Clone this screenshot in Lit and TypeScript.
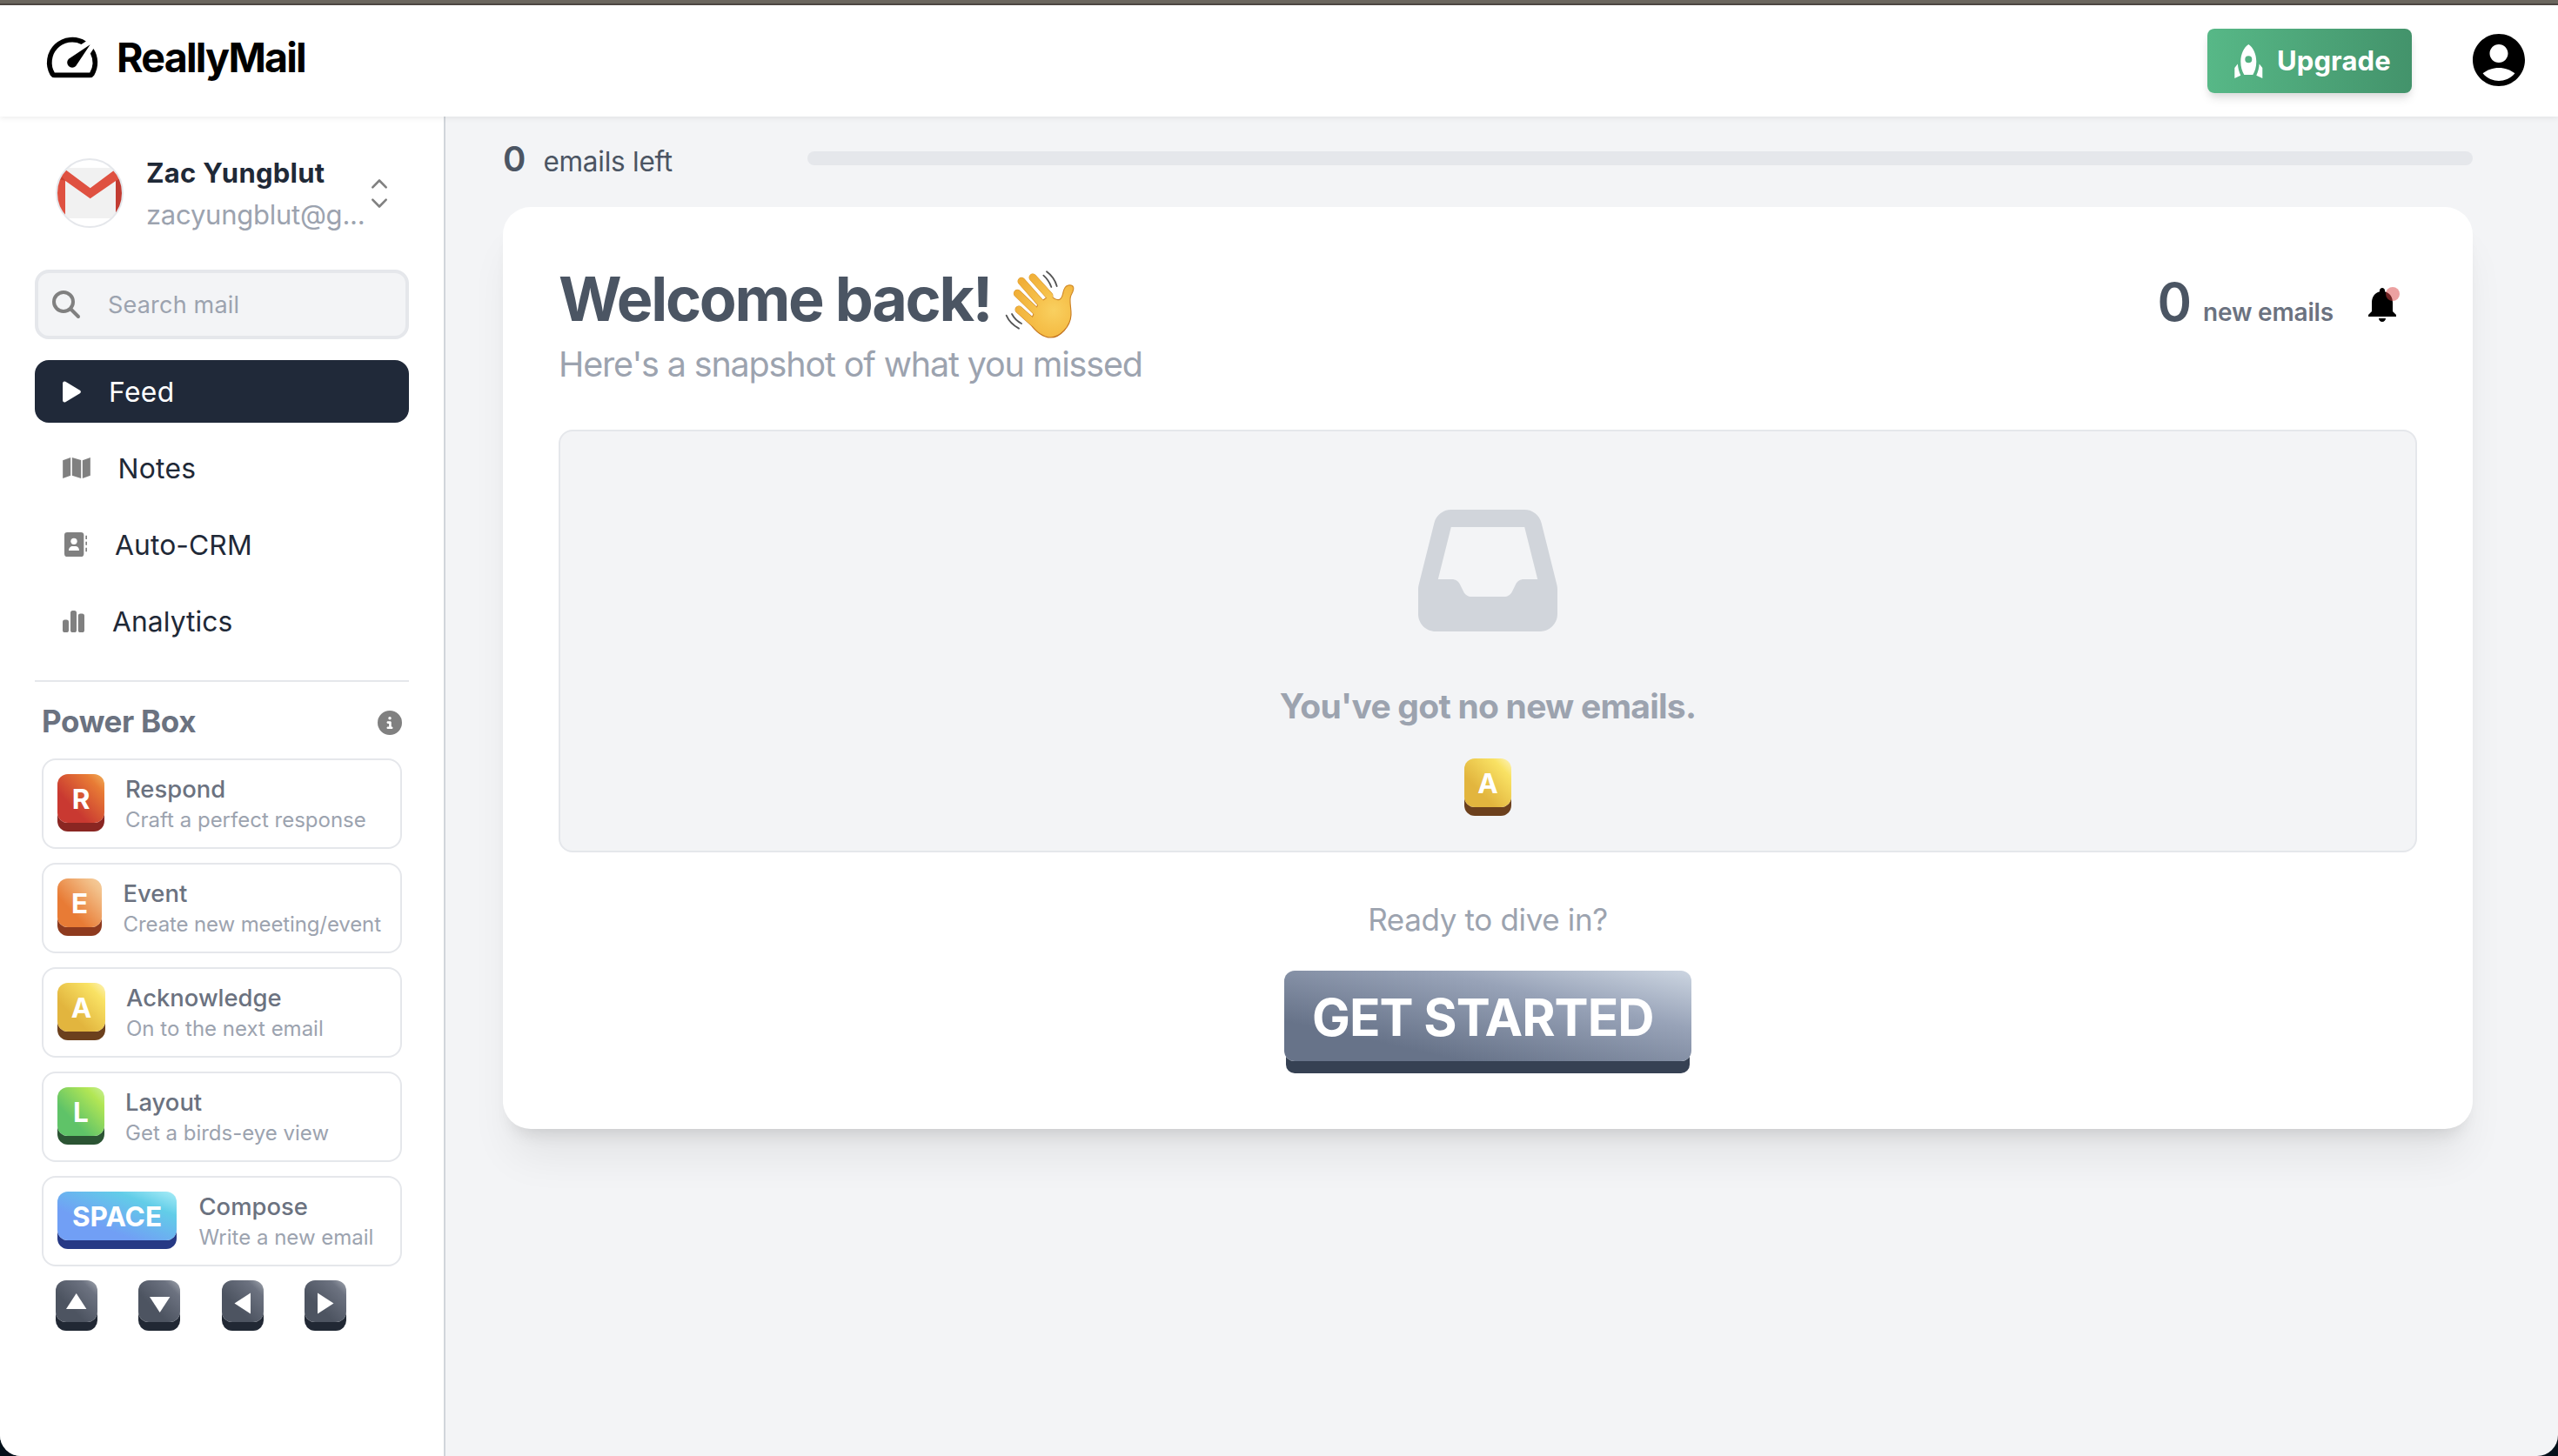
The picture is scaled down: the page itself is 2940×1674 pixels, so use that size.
import { LitElement, html, svg, css } from "lit";
import { customElement } from "lit/decorators.js";

const navIcons = {
  play: html`<svg width="21" height="25" viewBox="0 0 21 25"><path d="M2.200 2.600v19.800L18.800 12.500z" fill="#fff" stroke="#fff" stroke-width="4.200" stroke-linejoin="round"/></svg>`,
  map: html`<svg width="32" height="24" viewBox="0 0 95 72" fill="#808080"><path d="M0 10 27 0v62L0 72zM32 0l31 9v63l-31-10zM68 10 95 0v62l-27 10z"/></svg>`,
  contact: html`<svg width="28" height="28" viewBox="-6 0 84 84"><rect width="67" height="84" rx="10" fill="#808080"/><circle cx="33" cy="31" r="11" fill="#fff"/><path d="M15 63c0-10 7-15 13-15h10c7 0 13 5 13 15z" fill="#fff"/><path d="M73 11h5v13h-5zM73 32h5v12h-5zM73 53h5v14h-5z" fill="#808080"/></svg>`,
  bars: html`<svg width="26" height="25" viewBox="0 0 26 25" fill="#808080"><rect y="10.500" width="7" height="14.500" rx="2.600"/><rect x="9" width="7" height="25" rx="2.600"/><rect x="17.800" y="3.500" width="7.200" height="21.500" rx="2.600"/></svg>`,
};

const nav = [
  { label: "Feed", icon: navIcons.play, cls: "feed" },
  { label: "Notes", icon: navIcons.map, cls: "notes" },
  { label: "Auto-CRM", icon: navIcons.contact, cls: "crm" },
  { label: "Analytics", icon: navIcons.bars, cls: "analytics" },
];

const powers = [
  { key: "R", cls: "red", title: "Respond", text: "Craft a perfect response" },
  { key: "E", cls: "orange", title: "Event", text: "Create new meeting/event" },
  { key: "A", cls: "yellow", title: "Acknowledge", text: "On to the next email" },
  { key: "L", cls: "green", title: "Layout", text: "Get a birds-eye view" },
  { key: "SPACE", cls: "blue", title: "Compose", text: "Write a new email" },
];

const arrows = ["M0 18 11.7 0l11.7 18z", "M0 4h23.4L11.7 22z", "M21 -.5v24L2.5 11.5z", "M3 -.5v24L21.5 11.5z"];

const fingers = ["M123 51 180 114", "M84 64 154 143", "M70 106 138 172", "M75 162 124 206"];

const wave = html`<svg class="wave" width="100" height="94" viewBox="0 0 300 282">
  <defs>
    <radialGradient id="skin" gradientUnits="userSpaceOnUse" cx="195" cy="165" r="150">
      <stop offset="0" stop-color="#f9d060"/><stop offset=".45" stop-color="#f6c04a"/><stop offset="1" stop-color="#f0ae37"/>
    </radialGradient>
    <linearGradient id="edge" gradientUnits="userSpaceOnUse" x1="120" y1="60" x2="200" y2="260">
      <stop offset="0" stop-color="#dd9c31"/><stop offset="1" stop-color="#c0701d"/>
    </linearGradient>
  </defs>
  <g fill="none" stroke="url(#edge)" stroke-width="27" stroke-linecap="round">${fingers.map((d) => svg`<path d=${d}/>`)}</g>
  <path fill="url(#skin)" stroke="url(#edge)" stroke-width="3.500" d="M112 208C132 236 155 258 185 258c32 0 68-38 70-78 1-24-6-42-2-62 2-10 13-21 10-33-4-11-24-10-31 5-7 13-4 32-17 37-12 4-22-5-31-16l-42 30z"/>
  <g fill="none" stroke="url(#skin)" stroke-width="23.500" stroke-linecap="round">${fingers.map((d) => svg`<path d=${d}/>`)}</g>
  <path fill="url(#skin)" d="M122 200c18 26 40 46 64 46 28 0 58-32 60-66 1-20-6-40-2-62-12 18-40 24-56 2l-44 30z"/>
  <g fill="none" stroke="#555" stroke-width="5.500" stroke-linecap="round"><path d="M171 31Q197 50 206 81M160 44Q178 60 187 84M32 182Q44 210 75 227M51 177Q62 198 84 210"/></g>
</svg>`;

@customElement("app-root")
export class AppRoot extends LitElement {
  static styles = css`
    :host { display: block; height: 100vh; background: #04101a; font-family: Inter, "Liberation Sans", sans-serif; color: #1f2937; overflow: hidden; }
    * { box-sizing: border-box; }
    svg { display: block; flex: none; overflow: visible; }
    .t { white-space: pre; display: block; }
    .window { height: 100%; display: flex; flex-direction: column; border-radius: 0 0 24px 24px; overflow: hidden; background: #f3f4f6; }
    .strip { height: 6px; flex: none; background: #6b665e; border-bottom: 2px solid #4d4743; }
    header { height: 128px; flex: none; background: #fff; display: flex; align-items: center; justify-content: space-between; padding: 0 32px 0 48px; box-shadow: 0 2px 6px rgba(0,0,0,.07); position: relative; z-index: 1; }
    .brand { display: flex; align-items: center; gap: 16px; margin-top: -8px; }
    .brand .t { font-size: 46.6px; font-weight: 700; color: #000; letter-spacing: -1.8px; }
    .actions { display: flex; align-items: center; gap: 64px; }
    .avatar { margin-top: -2px; }
    .upgrade { width: 235px; height: 74px; border-radius: 8px; background: linear-gradient(90deg, #57b887, #43936b); color: #fff; display: flex; align-items: center; padding-left: 31px; gap: 16px; box-shadow: 0 8px 12px -2px rgba(0,0,0,.1), 0 4px 8px -2px rgba(0,0,0,.08); }
    .upgrade .t { font-size: 31px; font-weight: 700; letter-spacing: .1px; margin-top: -1px; }
    .body { flex: 1; display: flex; min-height: 0; }
    aside { width: 512px; flex: none; background: #fff; border-right: 2px solid #d1d5db; padding: 40px 40px 0; }
    .profile { height: 96px; padding-left: 24px; display: flex; align-items: center; }
    .names { width: 258.5px; margin: 1px 0 0 26px; line-height: 48px; }
    .name { font-size: 31px; font-weight: 700; letter-spacing: .25px; }
    .mail { font-size: 31px; color: #9ca3af; letter-spacing: -.25px; }
    .search { margin-top: 40px; height: 80px; border: 4px solid #e5e7eb; border-radius: 16px; background: #f3f4f6; display: flex; align-items: center; padding-left: 16px; gap: 32px; color: #9ca3af; font-size: 27px; letter-spacing: .2px; }
    .search .t { margin-top: 1px; }
    nav { margin-top: 24px; display: flex; flex-direction: column; gap: 16px; }
    .item { height: 72px; border-radius: 16px; display: flex; align-items: center; gap: 32px; padding-left: 32px; font-size: 31.8px; letter-spacing: .1px; }
    .item.feed { background: #202939; color: #fff; letter-spacing: .4px; }
    .item.notes { letter-spacing: .3px; gap: 31.5px; }
    .item.analytics { gap: 31px; letter-spacing: .05px; }
    .divider { height: 2px; background: #e5e7eb; margin-top: 32px; }
    .power-head { height: 88px; padding: 6px 8px 0; display: flex; align-items: center; justify-content: space-between; }
    .power-head .t { font-size: 35px; font-weight: 700; letter-spacing: -.35px; color: #6b7280; margin-top: -4px; }
    .powers { margin: 0 8px; display: flex; flex-direction: column; gap: 16px; }
    .power { height: 104px; border: 2px solid #e5e7eb; border-radius: 16px; padding: 16px; display: flex; gap: 24px; }
    .p-orange { gap: 24.600px; }
    .p-blue { gap: 25.500px; }
    .desc { line-height: 36px; margin-top: -1.500px; }
    .title { font-size: 27.400px; font-weight: 500; color: #6b7280; }
    .sub { font-size: 24px; color: #9ca3af; }
    .p-orange .sub { letter-spacing: -.12px; }
    .key { height: 56px; width: 54px; flex: none; border-radius: 12px; display: flex; align-items: center; justify-content: center; color: #fff; font-size: 31.5px; font-weight: 700; }
    .red { background: linear-gradient(to top right, #c93931 32%, #e87b35 80%, #f1b15c); box-shadow: 0 10px 0 #8a2622; }
    .orange { width: 51px; background: linear-gradient(to top right, #e87b35 32%, #f3c28c 85%, #f5cfa0); box-shadow: 0 10px 0 #8e3a1e; }
    .yellow { width: 55px; background: linear-gradient(to top right, #e2b53e 32%, #f9e264 80%, #fdf4bd); box-shadow: 0 10px 0 #6c401d; }
    .green { background: linear-gradient(to top right, #5fc368 32%, #b2e655 80%, #c9f09a); box-shadow: 0 10px 0 #2b5433; }
    .blue { width: 137px; background: linear-gradient(to top right, #719ff5 32%, #62cde8 75%, #a9edf7); box-shadow: 0 10px 0 #263985; }
    .arrows { display: flex; gap: 47.400px; margin: 16px 0 0 24px; }
    .arrow { width: 48px; height: 48px; border-radius: 12px; display: flex; align-items: center; justify-content: center; padding-top: 4px; background: linear-gradient(to top right, #4d5461 35%, #6c7280 80%, #a2a7b0); box-shadow: 0 10px 0 #212834; }
    main { flex: 1; padding: 40px 98px 0 66px; min-width: 0; }
    .quota { height: 64px; display: flex; align-items: flex-start; color: #4b5563; }
    .left { width: 350px; display: flex; align-items: baseline; gap: 20px; line-height: 40px; margin-top: -11px; }
    .left .n { font-size: 40px; font-weight: 600; }
    .left .w { font-size: 31.5px; letter-spacing: -.25px; }
    .bar { flex: 1; height: 16px; border-radius: 8px; background: #e5e7eb; }
    .card { height: 1060px; border-radius: 32px; background: #fff; padding: 64px; box-shadow: 0 40px 50px -10px rgba(0,0,0,.07), 0 16px 20px -12px rgba(0,0,0,.12); display: flex; flex-direction: column; align-items: center; }
    .top { width: 100%; height: 192px; display: flex; justify-content: space-between; align-items: flex-start; }
    .hello { display: flex; align-items: flex-start; gap: 6.5px; }
    .hello .t { font-size: 70px; line-height: 83px; font-weight: 700; color: #4b5563; letter-spacing: -2.3px; }
    .wave { margin-bottom: -11px; }
    .snap { font-size: 39.500px; line-height: 68px; color: #9ca3af; letter-spacing: -1.16px; }
    .news { height: 90px; display: flex; align-items: center; padding-right: 16px; }
    .news .pair { display: flex; align-items: baseline; gap: 13px; line-height: 60px; margin-top: 12px; }
    .news .n { font-size: 60px; font-weight: 600; color: #4b5563; }
    .news .w { font-size: 28px; font-weight: 600; color: #6b7280; letter-spacing: -.17px; }
    .bell { position: relative; margin: 6px 0 0 32px; }
    .dot { position: absolute; left: 28px; top: 4px; width: 16px; height: 16px; border-radius: 50%; background: rgba(217,68,68,.5); }
    .empty { width: 100%; height: 486px; flex: none; border: 2px solid #e5e7eb; border-radius: 16px; background: #f3f4f6; padding-top: 80px; display: flex; flex-direction: column; align-items: center; }
    .none { margin: 48px 0 32px; font-size: 39px; line-height: 56px; font-weight: 700; color: #9ca3af; letter-spacing: -.75px; }
    .empty .key { width: 54px; }
    .ready { margin-top: 49px; font-size: 35px; line-height: 56px; color: #9ca3af; letter-spacing: -.35px; }
    .start { margin-top: 31px; width: 468px; height: 104px; flex: none; border-radius: 12px; display: flex; align-items: center; padding: 2px 0 0 32px; background: linear-gradient(to top right, #677389 22%, #98a3b8 68%, #ccd5e1); box-shadow: 0 16px 0 -2px #364153; color: #fff; font-size: 58.5px; font-weight: 700; letter-spacing: -1px; }
  `;

  render() {
    return html`<div class="window">
      <div class="strip"></div>
      <header>
        <div class="brand">
          <svg width="70" height="70" viewBox="0 0 24 24"><path d="m20.380 8.570-1.230 1.850a8 8 0 0 1-.220 7.580H5.070A8 8 0 0 1 15.580 6.850l1.850-1.230A10 10 0 0 0 3.350 19a2 2 0 0 0 1.720 1h13.850a2 2 0 0 0 1.740-1 10 10 0 0 0-.270-10.440zm-9.790 6.840a2 2 0 0 0 2.830 0l5.660-8.490-8.490 5.660a2 2 0 0 0 0 2.830z"/></svg>
          <span class="t">ReallyMail</span>
        </div>
        <div class="actions">
          <div class="upgrade">
            <svg width="33" height="39" viewBox="0 0 33 39" fill="#fff"><path fill-rule="evenodd" d="M16.300 0C11 3.500 7.300 11 7.300 20c0 6 1.600 11 4 15h10c2.400-4 4-9 4-15 0-9-3.700-16.500-9-20zm0 13.200a4 4 0 1 1 0 8 4 4 0 0 1 0-8z"/><path d="M3.900 22.500.300 27v12l7-3.200C5.400 31.500 4.100 27 3.900 22.500zM28.700 22.500l3.600 4.500v12l-7-3.200c1.900-4.300 3.200-8.800 3.400-13.300z"/></svg>
            <span class="t">Upgrade</span>
          </div>
          <svg class="avatar" width="72" height="72" viewBox="0 0 24 24"><path d="M12 2C6.480 2 2 6.480 2 12s4.480 10 10 10 10-4.480 10-10S17.520 2 12 2zm0 4c1.930 0 3.500 1.570 3.500 3.500S13.930 13 12 13s-3.500-1.570-3.500-3.500S10.070 6 12 6zm0 14c-2.030 0-4.430-.820-6.140-2.880C7.550 15.800 9.680 15 12 15s4.450.800 6.140 2.120C16.430 19.180 14.030 20 12 20z"/></svg>
        </div>
      </header>
      <div class="body">
        <aside>
          <div class="profile">
            <svg width="78" height="80" viewBox="64 182 78 80">
              <defs><clipPath id="round"><ellipse cx="103" cy="222" rx="38" ry="39"/></clipPath></defs>
              <ellipse cx="103" cy="222" rx="38" ry="39" fill="#fff"/>
              <g clip-path="url(#round)"><path fill="#f1f1f1" d="M64 193h78v58H64z"/><path fill="#df5141" d="M64 200h11v60H64z"/><path fill="#c23b32" d="M133 200h10v60h-10z"/><path fill="#df5141" d="M68 204l6.500-9.500 29.200 21.700 29.200-21.700 8.100 9-8 4.500-29.300 20.300L74.500 207.500 72 208z"/><path fill="#c8402f" d="M66 206l3-5 6 6.500z"/></g>
              <ellipse cx="103" cy="222" rx="38" ry="39" fill="none" stroke="#e5e7eb" stroke-width="2"/>
            </svg>
            <div class="names"><span class="t name">Zac Yungblut</span><span class="t mail">zacyungblut@g...</span></div>
            <svg width="18" height="33" viewBox="0 0 18 33" fill="none" stroke="#808080" stroke-width="2.600" stroke-linecap="round" stroke-linejoin="round"><path d="M1.300 9.300 9 1.500l7.700 7.800M1.300 23.700 9 31.500l7.700-7.800"/></svg>
          </div>
          <div class="search">
            <svg width="32" height="32" viewBox="0 0 32 32" fill="none" stroke="#808080" stroke-width="4" stroke-linecap="round"><circle cx="13" cy="13" r="11"/><path d="m21.500 21.500 8.500 8.500"/></svg>
            <span class="t">Search mail</span>
          </div>
          <nav>${nav.map((n) => html`<div class="item ${n.cls}">${n.icon}<span class="t">${n.label}</span></div>`)}</nav>
          <div class="divider"></div>
          <div class="power-head">
            <span class="t">Power Box</span>
            <svg width="28" height="28" viewBox="0 0 512 512" fill="#808080"><path d="M256 512A256 256 0 1 0 256 0a256 256 0 1 0 0 512zM216 336h24V272H216c-13.300 0-24-10.700-24-24s10.700-24 24-24h48c13.300 0 24 10.700 24 24v88h8c13.300 0 24 10.700 24 24s-10.700 24-24 24H216c-13.300 0-24-10.700-24-24s10.700-24 24-24zm40-208a32 32 0 1 1 0 64 32 32 0 1 1 0-64z"/></svg>
          </div>
          <div class="powers">${powers.map((p) => html`<div class="power ${"p-" + p.cls}">
            <div class="key ${p.cls}"><span class="t">${p.key}</span></div>
            <div class="desc"><span class="t title">${p.title}</span><span class="t sub">${p.text}</span></div>
          </div>`)}</div>
          <div class="arrows">${arrows.map((d) => html`<div class="arrow"><svg width="23.400" height="23" viewBox="0 0 23.400 23"><path d=${d} fill="#fff"/></svg></div>`)}</div>
        </aside>
        <main>
          <div class="quota">
            <div class="left"><span class="t n">0</span><span class="t w">emails left</span></div>
            <div class="bar"></div>
          </div>
          <section class="card">
            <div class="top">
              <div>
                <div class="hello"><span class="t">Welcome back!</span>${wave}</div>
                <span class="t snap">Here's a snapshot of what you missed</span>
              </div>
              <div class="news">
                <div class="pair"><span class="t n">0</span><span class="t w">new emails</span></div>
                <div class="bell"><svg width="48" height="48" viewBox="0 0 24 24"><path d="M12 22c1.100 0 2-.900 2-2h-4c0 1.100.890 2 2 2zm6-6v-5c0-3.070-1.640-5.640-4.500-6.320V4c0-.830-.670-1.500-1.500-1.500s-1.500.670-1.500 1.500v.680C7.630 5.360 6 7.920 6 11v5l-2 2v1h16v-1l-2-2z"/></svg><span class="dot"></span></div>
              </div>
            </div>
            <div class="empty">
              <svg width="160" height="160" viewBox="0 0 512 512" fill="#d1d5db"><path d="M121 32C91.600 32 66 52 58.900 80.500L1.900 308.400C.600 313.500 0 318.700 0 323.900V416c0 35.300 28.700 64 64 64H448c35.300 0 64-28.700 64-64V323.900c0-5.200-.600-10.400-1.900-15.500l-57-227.900C446 52 420.400 32 391 32H121zm0 64H391l48 192H387.800c-12.100 0-23.200 6.800-28.600 17.700l-14.300 28.600c-5.400 10.800-16.500 17.700-28.600 17.700H195.800c-12.100 0-23.200-6.800-28.600-17.700l-14.300-28.600c-5.400-10.800-16.500-17.700-28.600-17.700H73L121 96z"/></svg>
              <span class="t none">You've got no new emails.</span>
              <div class="key yellow"><span class="t">A</span></div>
            </div>
            <span class="t ready">Ready to dive in?</span>
            <div class="start"><span class="t">GET STARTED</span></div>
          </section>
        </main>
      </div>
    </div>`;
  }
}
